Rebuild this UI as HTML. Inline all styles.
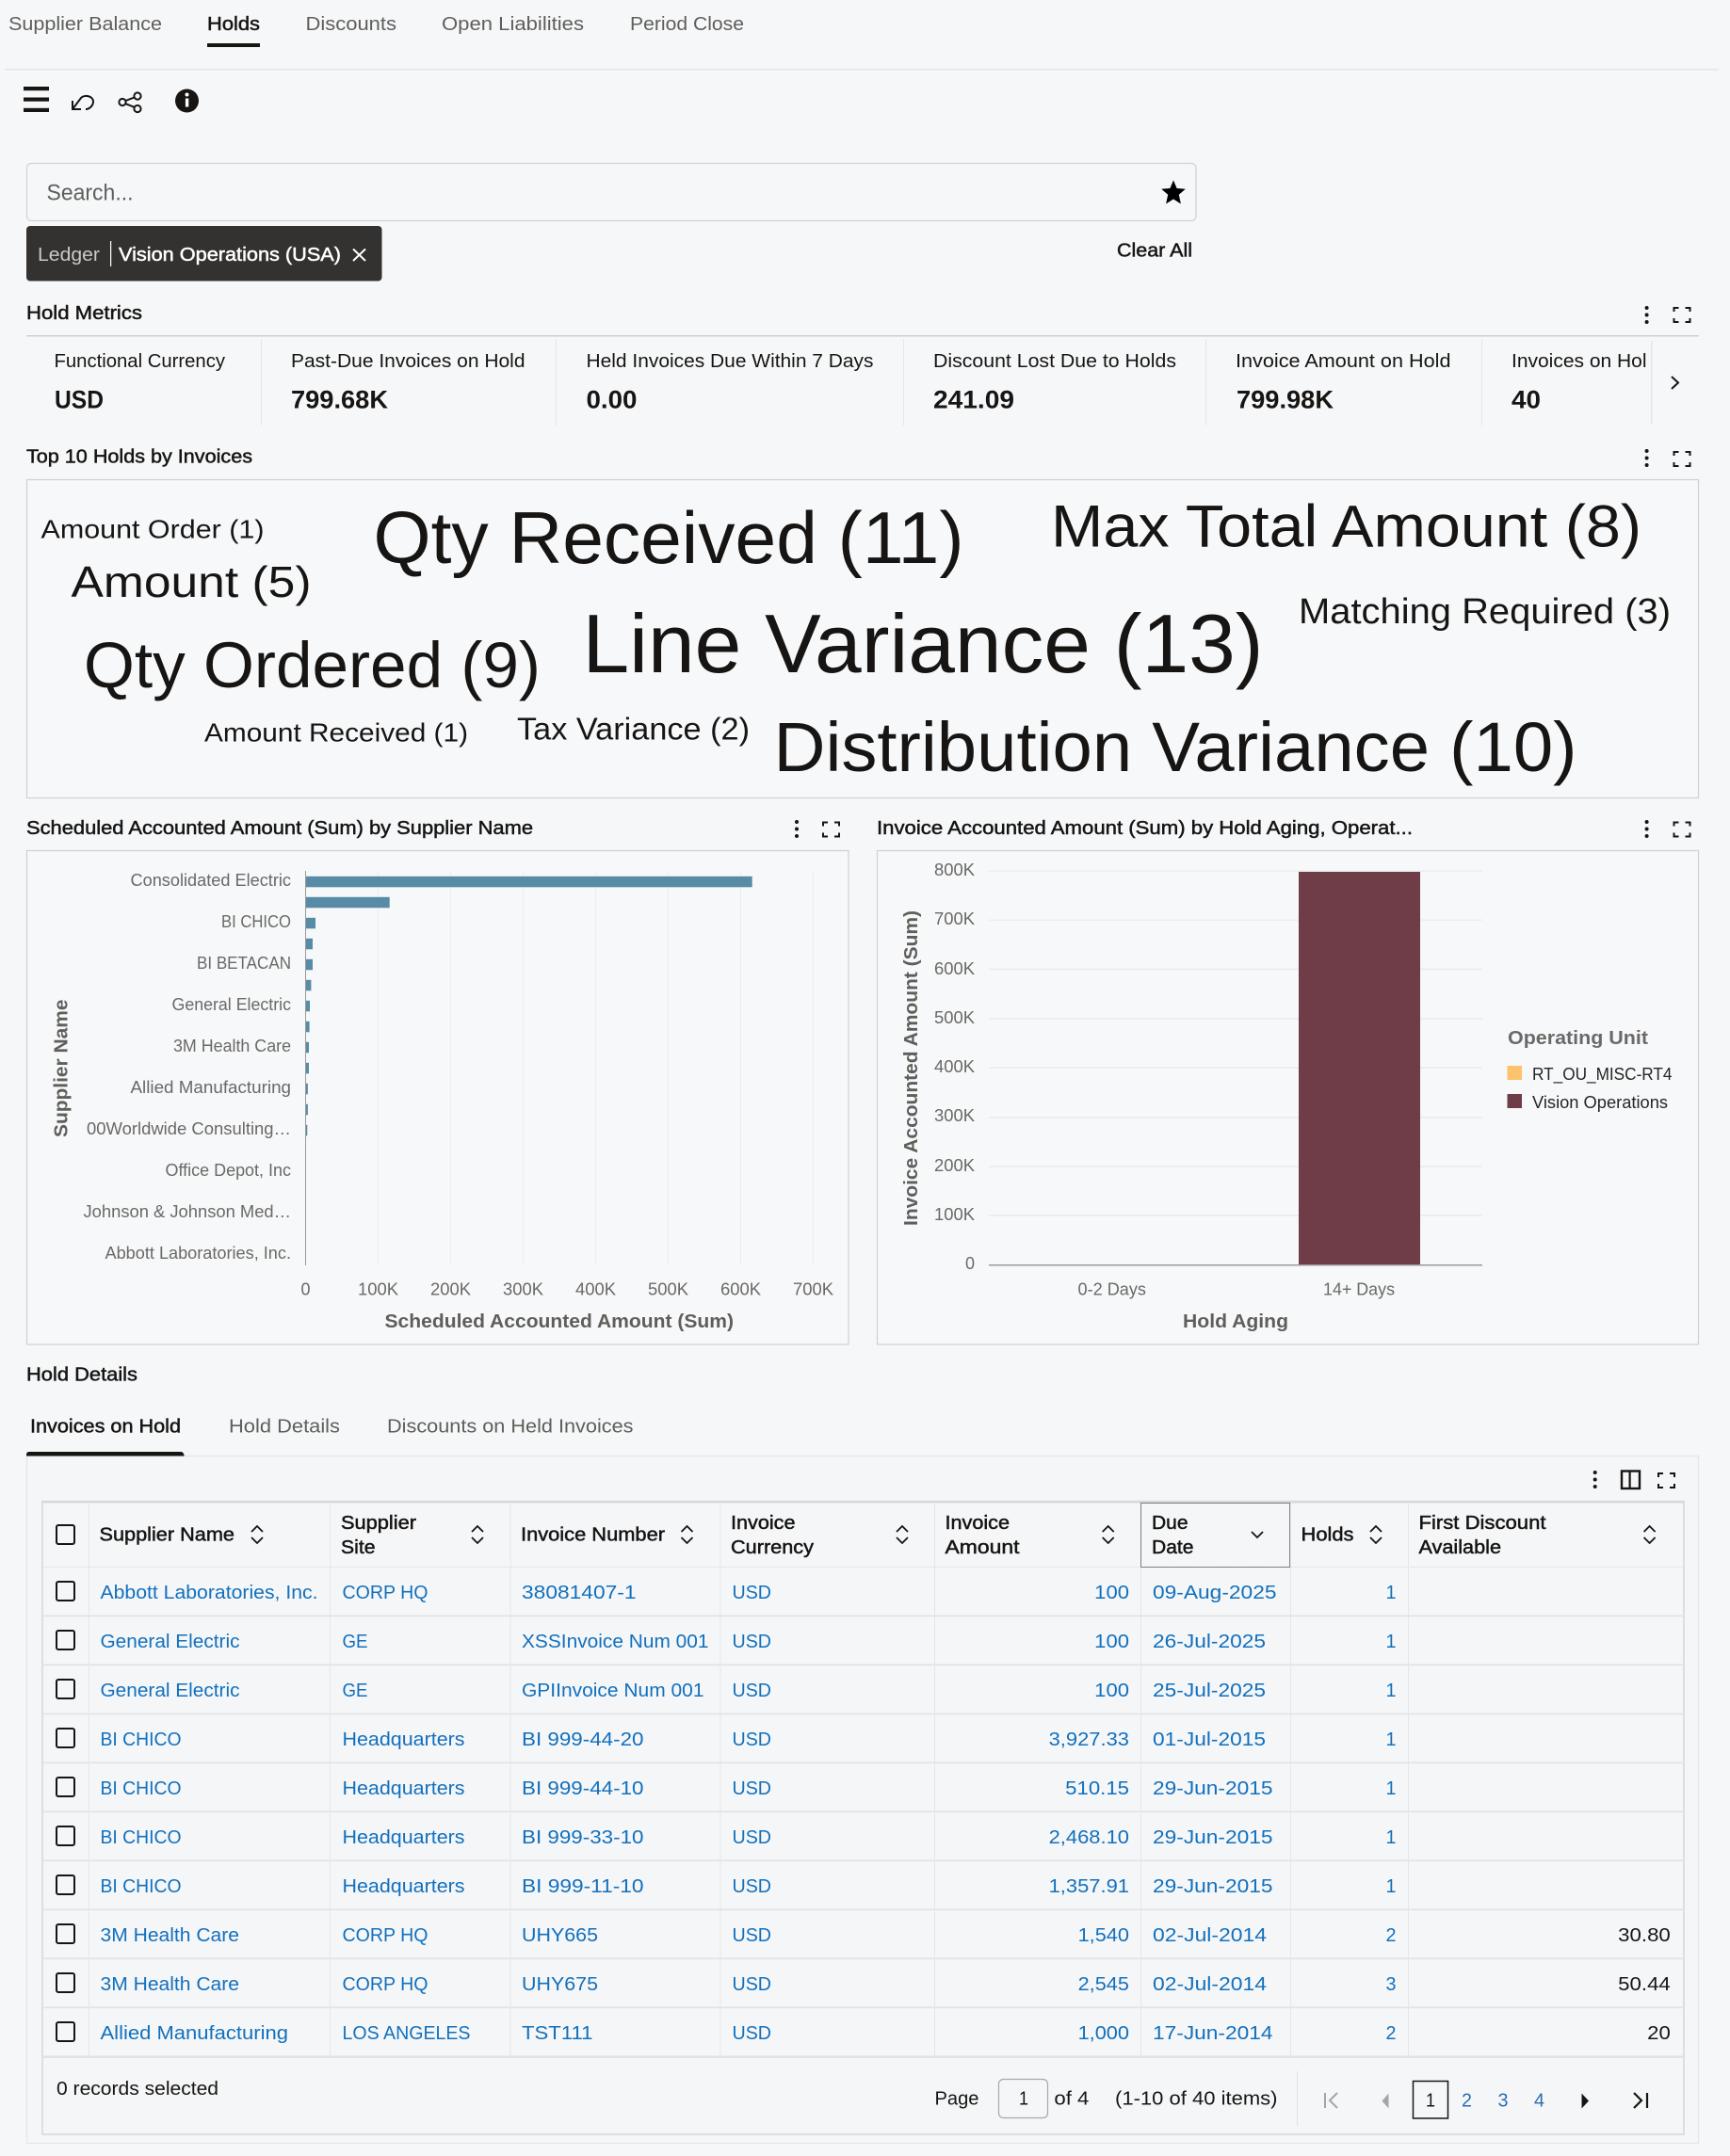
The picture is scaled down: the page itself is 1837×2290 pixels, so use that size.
<!DOCTYPE html>
<html lang="en">
<head>
<meta charset="utf-8">
<title>Holds</title>
<style>
html,body{margin:0;padding:0;background:#f6f7f9;width:1837px;height:2290px;overflow:hidden}
svg{display:block}
text{font-family:"Liberation Sans",Arial,sans-serif;font-size:20.5px;fill:#161513}
.s{stroke:#161513;stroke-width:.5px}
.g{fill:#5f5e5b}
.a{fill:#6a6966;font-size:18.5px}
.at{fill:#5f5e5b;font-weight:700;font-size:20px}
.l{fill:#1270bd}
.v{font-weight:700;font-size:27px}
.ic{fill:none;stroke:#161513;stroke-width:2}
</style>
</head>
<body>
<svg width="1837" height="2290" viewBox="0 0 1837 2290" xmlns="http://www.w3.org/2000/svg">
<defs>
<g id="exp" fill="none" stroke="#161513" stroke-width="2"><path d="M1 5V1h5M13 1h5v4M1 12v4h5M13 16h5v-4"/></g>
<g id="dots" fill="#161513"><circle cx="0" cy="1.5" r="2"/><circle cx="0" cy="9" r="2"/><circle cx="0" cy="16.5" r="2"/></g>
<g id="sort" fill="none" stroke="#161513" stroke-width="1.8"><path d="M-6 -3l6-6 6 6M-6 3l6 6 6-6"/></g>
<rect id="cb" width="19" height="20" rx="2" fill="none" stroke="#161513" stroke-width="2"/>
</defs>
<rect width="1837" height="2290" fill="#f6f7f9"/>

<!-- top tabs -->
<text class="g" x="9" y="32" textLength="163" lengthAdjust="spacingAndGlyphs">Supplier Balance</text>
<text class="s" x="220" y="32" textLength="56" lengthAdjust="spacingAndGlyphs">Holds</text>
<text class="g" x="324.5" y="32" textLength="96.5" lengthAdjust="spacingAndGlyphs">Discounts</text>
<text class="g" x="469" y="32" textLength="151" lengthAdjust="spacingAndGlyphs">Open Liabilities</text>
<text class="g" x="669" y="32" textLength="121" lengthAdjust="spacingAndGlyphs">Period Close</text>
<rect x="220" y="46" width="56" height="4" fill="#161513"/>
<rect x="5" y="73" width="1820" height="1.5" fill="#e5e5e5"/>

<!-- toolbar icons -->
<rect x="25" y="92" width="27" height="4.2" fill="#161513"/>
<rect x="25" y="103.5" width="27" height="4.2" fill="#161513"/>
<rect x="25" y="114.8" width="27" height="4.2" fill="#161513"/>
<path class="ic" d="M77 107v9h9M77 116l9-12c4-4 13-2 13 4 0 4-4 8-8 8"/>
<g class="ic"><circle cx="146" cy="102" r="3.6"/><circle cx="130" cy="108.5" r="3.6"/><circle cx="146" cy="115.5" r="3.6"/><path d="M133.3 107l9.4-3.6M133.3 110.2l9.4 3.6"/></g>
<circle cx="198.5" cy="107" r="12.5" fill="#161513"/>
<circle cx="198.5" cy="100.5" r="2" fill="#fff"/>
<rect x="196.9" y="104.5" width="3.4" height="9" fill="#fff"/>

<!-- search -->
<rect x="28.5" y="173.5" width="1241.5" height="61" rx="5" fill="#f6f7f9" stroke="#d2d2d2" stroke-width="1.2"/>
<text x="49.5" y="212.5" textLength="92" lengthAdjust="spacingAndGlyphs" style="font-size:24px;fill:#5f5e5b">Search...</text>
<polygon fill="#000" points="1246,191.5 1249.6,200 1258.8,200.8 1251.8,206.8 1253.9,216.5 1246,211.5 1238.1,216.5 1240.2,206.8 1233.2,200.8 1242.4,200"/>

<!-- chip -->
<rect x="28" y="240" width="377.5" height="58.5" rx="4" fill="#333231"/>
<text x="40" y="277" textLength="66" lengthAdjust="spacingAndGlyphs" style="fill:#c9c8c5">Ledger</text>
<rect x="117" y="256" width="1.2" height="27" fill="#fff"/>
<text x="126" y="277" textLength="236" lengthAdjust="spacingAndGlyphs" style="fill:#fff;stroke:#fff;stroke-width:.5px">Vision Operations (USA)</text>
<path d="M375 264.5l13 12.5M388 264.5l-13 12.5" stroke="#fff" stroke-width="2" fill="none"/>
<text class="s" x="1186" y="272.5" textLength="80" lengthAdjust="spacingAndGlyphs">Clear All</text>

<!-- hold metrics -->
<text class="s" x="28" y="339" textLength="123" lengthAdjust="spacingAndGlyphs">Hold Metrics</text>
<use href="#dots" x="1748.6" y="325.5"/>
<use href="#exp" x="1776.5" y="326"/>
<rect x="28" y="356" width="1776" height="1.5" fill="#d0d0d0"/>
<g fill="#e6e6e6">
<rect x="277" y="360" width="1" height="92"/><rect x="590" y="360" width="1" height="92"/><rect x="959" y="360" width="1" height="92"/><rect x="1280" y="360" width="1" height="92"/><rect x="1573" y="360" width="1" height="92"/><rect x="1753" y="362" width="1.5" height="88"/>
</g>
<text x="57.5" y="390" textLength="181.5" lengthAdjust="spacingAndGlyphs">Functional Currency</text>
<text x="309" y="390" textLength="248.5" lengthAdjust="spacingAndGlyphs">Past-Due Invoices on Hold</text>
<text x="622.5" y="390" textLength="305" lengthAdjust="spacingAndGlyphs">Held Invoices Due Within 7 Days</text>
<text x="991" y="390" textLength="258" lengthAdjust="spacingAndGlyphs">Discount Lost Due to Holds</text>
<text x="1312" y="390" textLength="228.5" lengthAdjust="spacingAndGlyphs">Invoice Amount on Hold</text>
<text x="1605" y="390" textLength="143.5" lengthAdjust="spacingAndGlyphs">Invoices on Hol</text>
<text class="v" x="58" y="433.5" textLength="52" lengthAdjust="spacingAndGlyphs">USD</text>
<text class="v" x="309" y="433.5" textLength="103" lengthAdjust="spacingAndGlyphs">799.68K</text>
<text class="v" x="622.5" y="433.5" textLength="54" lengthAdjust="spacingAndGlyphs">0.00</text>
<text class="v" x="991" y="433.5" textLength="86" lengthAdjust="spacingAndGlyphs">241.09</text>
<text class="v" x="1313" y="433.5" textLength="103" lengthAdjust="spacingAndGlyphs">799.98K</text>
<text class="v" x="1605" y="433.5" textLength="31" lengthAdjust="spacingAndGlyphs">40</text>
<path class="ic" d="M1775 400l7 6.5-7 6.5"/>

<!-- word cloud -->
<text class="s" x="28" y="491.5" textLength="240" lengthAdjust="spacingAndGlyphs">Top 10 Holds by Invoices</text>
<use href="#dots" x="1748.6" y="477.5"/>
<use href="#exp" x="1776.5" y="479"/>
<rect x="28.5" y="509.5" width="1775" height="338" fill="#f7f8fa" stroke="#cfd0d2" stroke-width="1.2"/>
<text x="43.5" y="571.5" textLength="237" lengthAdjust="spacingAndGlyphs" style="font-size:28px">Amount Order (1)</text>
<text x="75.5" y="634" textLength="255" lengthAdjust="spacingAndGlyphs" style="font-size:46px">Amount (5)</text>
<text x="396.5" y="598" textLength="627" lengthAdjust="spacingAndGlyphs" style="font-size:78px">Qty Received (11)</text>
<text x="1116" y="580.5" textLength="627" lengthAdjust="spacingAndGlyphs" style="font-size:63px">Max Total Amount (8)</text>
<text x="89" y="730" textLength="485" lengthAdjust="spacingAndGlyphs" style="font-size:69px">Qty Ordered (9)</text>
<text x="618.5" y="714" textLength="723" lengthAdjust="spacingAndGlyphs" style="font-size:88px">Line Variance (13)</text>
<text x="1379" y="662" textLength="395" lengthAdjust="spacingAndGlyphs" style="font-size:38px">Matching Required (3)</text>
<text x="217" y="787.5" textLength="280" lengthAdjust="spacingAndGlyphs" style="font-size:28px">Amount Received (1)</text>
<text x="549" y="785.5" textLength="247" lengthAdjust="spacingAndGlyphs" style="font-size:33px">Tax Variance (2)</text>
<text x="821.5" y="819" textLength="853" lengthAdjust="spacingAndGlyphs" style="font-size:74px">Distribution Variance (10)</text>

<!-- chart 1 -->
<text class="s" x="28" y="886" textLength="538" lengthAdjust="spacingAndGlyphs">Scheduled Accounted Amount (Sum) by Supplier Name</text>
<use href="#dots" x="846" y="871.5"/>
<use href="#exp" x="873" y="872.5"/>
<rect x="28.5" y="903.5" width="872.5" height="524.5" fill="#f7f8fa" stroke="#cfd0d2" stroke-width="1.2"/>
<g fill="#ecedee">
<rect x="401" y="925" width="1" height="419"/><rect x="478" y="925" width="1" height="419"/><rect x="555" y="925" width="1" height="419"/><rect x="632" y="925" width="1" height="419"/><rect x="709" y="925" width="1" height="419"/><rect x="786" y="925" width="1" height="419"/><rect x="863" y="925" width="1" height="419"/>
</g>
<g fill="#588ba5">
<rect x="324.5" y="930.8" width="474.2" height="11.5"/>
<rect x="324.5" y="952.8" width="89.2" height="11.5"/>
<rect x="324.5" y="974.8" width="10.5" height="11.5"/>
<rect x="324.5" y="996.8" width="7.5" height="11.5"/>
<rect x="324.5" y="1018.8" width="7.5" height="11.5"/>
<rect x="324.5" y="1040.8" width="5.9" height="11.5"/>
<rect x="324.5" y="1062.8" width="4.5" height="11.5"/>
<rect x="324.5" y="1084.8" width="4.1" height="11.5"/>
<rect x="324.5" y="1106.8" width="3.5" height="11.5"/>
<rect x="324.5" y="1128.8" width="3.5" height="11.5"/>
<rect x="324.5" y="1150.8" width="2.4" height="11.5"/>
<rect x="324.5" y="1172.8" width="2.4" height="11.5"/>
<rect x="324.5" y="1194.8" width="1.8" height="11.5"/>
</g>
<rect x="324" y="925" width="1" height="419" fill="#9a9a9a"/>
<text class="a" x="138.5" y="941" textLength="170.5" lengthAdjust="spacingAndGlyphs">Consolidated Electric</text>
<text class="a" x="235" y="985" textLength="74" lengthAdjust="spacingAndGlyphs">BI CHICO</text>
<text class="a" x="209" y="1029" textLength="100" lengthAdjust="spacingAndGlyphs">BI BETACAN</text>
<text class="a" x="182.5" y="1073" textLength="126.5" lengthAdjust="spacingAndGlyphs">General Electric</text>
<text class="a" x="184" y="1117" textLength="125" lengthAdjust="spacingAndGlyphs">3M Health Care</text>
<text class="a" x="138.5" y="1161" textLength="170.5" lengthAdjust="spacingAndGlyphs">Allied Manufacturing</text>
<text class="a" x="92" y="1205" textLength="217" lengthAdjust="spacingAndGlyphs">00Worldwide Consulting…</text>
<text class="a" x="175.5" y="1249" textLength="133.5" lengthAdjust="spacingAndGlyphs">Office Depot, Inc</text>
<text class="a" x="88.5" y="1293" textLength="220.5" lengthAdjust="spacingAndGlyphs">Johnson &amp; Johnson Med…</text>
<text class="a" x="111.5" y="1337" textLength="197.5" lengthAdjust="spacingAndGlyphs">Abbott Laboratories, Inc.</text>
<text class="a" x="319.5" y="1375.5" textLength="10" lengthAdjust="spacingAndGlyphs">0</text>
<text class="a" x="380" y="1375.5" textLength="43" lengthAdjust="spacingAndGlyphs">100K</text>
<text class="a" x="457" y="1375.5" textLength="43" lengthAdjust="spacingAndGlyphs">200K</text>
<text class="a" x="534" y="1375.5" textLength="43" lengthAdjust="spacingAndGlyphs">300K</text>
<text class="a" x="611" y="1375.5" textLength="43" lengthAdjust="spacingAndGlyphs">400K</text>
<text class="a" x="688" y="1375.5" textLength="43" lengthAdjust="spacingAndGlyphs">500K</text>
<text class="a" x="765" y="1375.5" textLength="43" lengthAdjust="spacingAndGlyphs">600K</text>
<text class="a" x="842" y="1375.5" textLength="43" lengthAdjust="spacingAndGlyphs">700K</text>
<text class="at" x="408.5" y="1410" textLength="370.5" lengthAdjust="spacingAndGlyphs">Scheduled Accounted Amount (Sum)</text>
<text class="at" transform="translate(71.5 1208) rotate(-90)" x="0" y="0" textLength="146.5" lengthAdjust="spacingAndGlyphs">Supplier Name</text>

<!-- chart 2 -->
<text class="s" x="931" y="886" textLength="569" lengthAdjust="spacingAndGlyphs">Invoice Accounted Amount (Sum) by Hold Aging, Operat...</text>
<use href="#dots" x="1748.6" y="871.5"/>
<use href="#exp" x="1776.5" y="872.5"/>
<rect x="931.5" y="903.5" width="872" height="524.5" fill="#f7f8fa" stroke="#cfd0d2" stroke-width="1.2"/>
<g fill="#ebeef1">
<rect x="1050" y="924.5" width="524" height="1.5"/><rect x="1050" y="976.5" width="524" height="1.5"/><rect x="1050" y="1028.5" width="524" height="2"/><rect x="1050" y="1081" width="524" height="2"/><rect x="1050" y="1133" width="524" height="2"/><rect x="1050" y="1186" width="524" height="2"/><rect x="1050" y="1238" width="524" height="2"/><rect x="1050" y="1290" width="524" height="2"/>
</g>
<rect x="1379" y="926" width="129" height="417" fill="#6f3d48"/>
<rect x="1050" y="1343" width="524" height="1.5" fill="#9a9a9a"/>
<text class="a" x="992" y="930" textLength="43" lengthAdjust="spacingAndGlyphs">800K</text>
<text class="a" x="992" y="982" textLength="43" lengthAdjust="spacingAndGlyphs">700K</text>
<text class="a" x="992" y="1035" textLength="43" lengthAdjust="spacingAndGlyphs">600K</text>
<text class="a" x="992" y="1087" textLength="43" lengthAdjust="spacingAndGlyphs">500K</text>
<text class="a" x="992" y="1139" textLength="43" lengthAdjust="spacingAndGlyphs">400K</text>
<text class="a" x="992" y="1191" textLength="43" lengthAdjust="spacingAndGlyphs">300K</text>
<text class="a" x="992" y="1244" textLength="43" lengthAdjust="spacingAndGlyphs">200K</text>
<text class="a" x="992" y="1296" textLength="43" lengthAdjust="spacingAndGlyphs">100K</text>
<text class="a" x="1025" y="1348" textLength="10" lengthAdjust="spacingAndGlyphs">0</text>
<text class="a" x="1144.5" y="1375.5" textLength="72.5" lengthAdjust="spacingAndGlyphs">0-2 Days</text>
<text class="a" x="1405" y="1375.5" textLength="76" lengthAdjust="spacingAndGlyphs">14+ Days</text>
<text class="at" x="1256" y="1410" textLength="112" lengthAdjust="spacingAndGlyphs">Hold Aging</text>
<text class="at" transform="translate(974 1302) rotate(-90)" x="0" y="0" textLength="335" lengthAdjust="spacingAndGlyphs">Invoice Accounted Amount (Sum)</text>
<text class="at" x="1601" y="1109" textLength="149" lengthAdjust="spacingAndGlyphs" style="fill:#6b6a68">Operating Unit</text>
<rect x="1600.5" y="1132" width="15.5" height="15" fill="#fcc26d"/>
<rect x="1600.5" y="1162" width="15.5" height="15" fill="#6f3d48"/>
<text x="1627" y="1147" textLength="148.5" lengthAdjust="spacingAndGlyphs" style="font-size:18px;fill:#262522">RT_OU_MISC-RT4</text>
<text x="1627" y="1177" textLength="144" lengthAdjust="spacingAndGlyphs" style="font-size:18px;fill:#262522">Vision Operations</text>

<!-- hold details -->
<text class="s" x="28" y="1466.5" textLength="118" lengthAdjust="spacingAndGlyphs">Hold Details</text>
<text class="s" x="32" y="1521.5" textLength="160" lengthAdjust="spacingAndGlyphs">Invoices on Hold</text>
<text class="g" x="243" y="1521.5" textLength="118" lengthAdjust="spacingAndGlyphs">Hold Details</text>
<text class="g" x="411" y="1521.5" textLength="261.5" lengthAdjust="spacingAndGlyphs">Discounts on Held Invoices</text>
<path d="M28 1546v-1q0-3 3-3h161q3 0 3.5 4z" fill="#161513"/>
<rect x="28.5" y="1546.5" width="1775" height="730" fill="#f5f6f8" stroke="#e6e6e6" stroke-width="1.2"/>
<path d="M28 1546h167.5" stroke="#161513" stroke-width="1"/>
<use href="#dots" x="1693.7" y="1562.5"/>
<rect x="1722" y="1562.5" width="19" height="18.5" fill="none" stroke="#161513" stroke-width="2.4"/>
<rect x="1729.5" y="1562.5" width="2.2" height="18.5" fill="#161513"/>
<use href="#exp" x="1760" y="1564"/>

<!-- table frame -->
<rect x="45" y="1594.5" width="1743" height="672.5" fill="#f5f6f8" stroke="#cfcfcd" stroke-width="1.2"/>
<rect x="45" y="1594" width="1743" height="2.5" fill="#d8d8d6"/>
<path d="M45 1664.5H1788" stroke="#d8d8d6" stroke-width="1" stroke-dasharray="1 1" fill="none"/>
<g fill="#e2e2e0">
<rect x="45" y="1715.5" width="1743" height="1.6"/><rect x="45" y="1767.5" width="1743" height="1.6"/><rect x="45" y="1819.6" width="1743" height="1.6"/><rect x="45" y="1871.5" width="1743" height="1.6"/><rect x="45" y="1923.5" width="1743" height="1.6"/><rect x="45" y="1975.5" width="1743" height="1.6"/><rect x="45" y="2027.5" width="1743" height="1.6"/><rect x="45" y="2079.5" width="1743" height="1.6"/><rect x="45" y="2131.5" width="1743" height="1.6"/>
<rect x="45" y="2183.5" width="1743" height="2.5"/>
</g>
<g fill="#e6e6e6">
<rect x="94" y="1596" width="1" height="588"/><rect x="350" y="1596" width="1" height="588"/><rect x="541.5" y="1596" width="1" height="588"/><rect x="764.5" y="1596" width="1" height="588"/><rect x="992" y="1596" width="1" height="588"/><rect x="1211" y="1596" width="1" height="588"/><rect x="1370" y="1596" width="1" height="588"/><rect x="1495" y="1596" width="1" height="588"/>
</g>
<rect x="1211.5" y="1596.5" width="158" height="68" fill="none" stroke="#161513" stroke-width="1" stroke-dasharray="1 1"/>

<!-- header -->
<use href="#cb" x="60" y="1620"/>
<text class="s" x="105.5" y="1636.5" textLength="143.5" lengthAdjust="spacingAndGlyphs">Supplier Name</text>
<use href="#sort" x="273" y="1630"/>
<text class="s" x="362" y="1624" textLength="80" lengthAdjust="spacingAndGlyphs">Supplier</text>
<text class="s" x="362" y="1650" textLength="36.5" lengthAdjust="spacingAndGlyphs">Site</text>
<use href="#sort" x="507" y="1630"/>
<text class="s" x="553" y="1636.5" textLength="153" lengthAdjust="spacingAndGlyphs">Invoice Number</text>
<use href="#sort" x="729.5" y="1630"/>
<text class="s" x="776" y="1624" textLength="68.5" lengthAdjust="spacingAndGlyphs">Invoice</text>
<text class="s" x="776" y="1650" textLength="88" lengthAdjust="spacingAndGlyphs">Currency</text>
<use href="#sort" x="958" y="1630"/>
<text class="s" x="1003.5" y="1624" textLength="68.5" lengthAdjust="spacingAndGlyphs">Invoice</text>
<text class="s" x="1003.5" y="1650" textLength="79" lengthAdjust="spacingAndGlyphs">Amount</text>
<use href="#sort" x="1176.7" y="1630"/>
<text class="s" x="1223" y="1624" textLength="38.5" lengthAdjust="spacingAndGlyphs">Due</text>
<text class="s" x="1223" y="1650" textLength="44.5" lengthAdjust="spacingAndGlyphs">Date</text>
<path d="M1329 1627l6 6 6-6" fill="none" stroke="#161513" stroke-width="1.8"/>
<text class="s" x="1381.5" y="1636.5" textLength="56" lengthAdjust="spacingAndGlyphs">Holds</text>
<use href="#sort" x="1461" y="1630"/>
<text class="s" x="1506.5" y="1624" textLength="135" lengthAdjust="spacingAndGlyphs">First Discount</text>
<text class="s" x="1506.5" y="1650" textLength="87.5" lengthAdjust="spacingAndGlyphs">Available</text>
<use href="#sort" x="1751.6" y="1630"/>

<!-- checkboxes -->
<use href="#cb" x="60" y="1680"/><use href="#cb" x="60" y="1732"/><use href="#cb" x="60" y="1784"/><use href="#cb" x="60" y="1836"/><use href="#cb" x="60" y="1888"/><use href="#cb" x="60" y="1940"/><use href="#cb" x="60" y="1992"/><use href="#cb" x="60" y="2044"/><use href="#cb" x="60" y="2096"/><use href="#cb" x="60" y="2148"/>

<!-- col 1 -->
<text class="l" x="106.5" y="1698" textLength="231" lengthAdjust="spacingAndGlyphs">Abbott Laboratories, Inc.</text>
<text class="l" x="106.5" y="1750" textLength="148" lengthAdjust="spacingAndGlyphs">General Electric</text>
<text class="l" x="106.5" y="1802" textLength="148" lengthAdjust="spacingAndGlyphs">General Electric</text>
<text class="l" x="106.5" y="1854" textLength="86" lengthAdjust="spacingAndGlyphs">BI CHICO</text>
<text class="l" x="106.5" y="1906" textLength="86" lengthAdjust="spacingAndGlyphs">BI CHICO</text>
<text class="l" x="106.5" y="1958" textLength="86" lengthAdjust="spacingAndGlyphs">BI CHICO</text>
<text class="l" x="106.5" y="2010" textLength="86" lengthAdjust="spacingAndGlyphs">BI CHICO</text>
<text class="l" x="106.5" y="2062" textLength="147.5" lengthAdjust="spacingAndGlyphs">3M Health Care</text>
<text class="l" x="106.5" y="2114" textLength="147.5" lengthAdjust="spacingAndGlyphs">3M Health Care</text>
<text class="l" x="106.5" y="2166" textLength="199.5" lengthAdjust="spacingAndGlyphs">Allied Manufacturing</text>
<!-- col 2 -->
<text class="l" x="363.5" y="1698" textLength="91" lengthAdjust="spacingAndGlyphs">CORP HQ</text>
<text class="l" x="363.5" y="1750" textLength="27" lengthAdjust="spacingAndGlyphs">GE</text>
<text class="l" x="363.5" y="1802" textLength="27" lengthAdjust="spacingAndGlyphs">GE</text>
<text class="l" x="363.5" y="1854" textLength="130" lengthAdjust="spacingAndGlyphs">Headquarters</text>
<text class="l" x="363.5" y="1906" textLength="130" lengthAdjust="spacingAndGlyphs">Headquarters</text>
<text class="l" x="363.5" y="1958" textLength="130" lengthAdjust="spacingAndGlyphs">Headquarters</text>
<text class="l" x="363.5" y="2010" textLength="130" lengthAdjust="spacingAndGlyphs">Headquarters</text>
<text class="l" x="363.5" y="2062" textLength="91" lengthAdjust="spacingAndGlyphs">CORP HQ</text>
<text class="l" x="363.5" y="2114" textLength="91" lengthAdjust="spacingAndGlyphs">CORP HQ</text>
<text class="l" x="363.5" y="2166" textLength="136" lengthAdjust="spacingAndGlyphs">LOS ANGELES</text>
<!-- col 3 -->
<text class="l" x="554" y="1698" textLength="121.5" lengthAdjust="spacingAndGlyphs">38081407-1</text>
<text class="l" x="554" y="1750" textLength="198.5" lengthAdjust="spacingAndGlyphs">XSSInvoice Num 001</text>
<text class="l" x="554" y="1802" textLength="193.5" lengthAdjust="spacingAndGlyphs">GPIInvoice Num 001</text>
<text class="l" x="554" y="1854" textLength="129.5" lengthAdjust="spacingAndGlyphs">BI 999-44-20</text>
<text class="l" x="554" y="1906" textLength="129.5" lengthAdjust="spacingAndGlyphs">BI 999-44-10</text>
<text class="l" x="554" y="1958" textLength="129.5" lengthAdjust="spacingAndGlyphs">BI 999-33-10</text>
<text class="l" x="554" y="2010" textLength="129.5" lengthAdjust="spacingAndGlyphs">BI 999-11-10</text>
<text class="l" x="554" y="2062" textLength="81" lengthAdjust="spacingAndGlyphs">UHY665</text>
<text class="l" x="554" y="2114" textLength="81" lengthAdjust="spacingAndGlyphs">UHY675</text>
<text class="l" x="554" y="2166" textLength="75.5" lengthAdjust="spacingAndGlyphs">TST111</text>
<!-- col 4 -->
<text class="l" x="777.5" y="1698" textLength="41.5" lengthAdjust="spacingAndGlyphs">USD</text>
<text class="l" x="777.5" y="1750" textLength="41.5" lengthAdjust="spacingAndGlyphs">USD</text>
<text class="l" x="777.5" y="1802" textLength="41.5" lengthAdjust="spacingAndGlyphs">USD</text>
<text class="l" x="777.5" y="1854" textLength="41.5" lengthAdjust="spacingAndGlyphs">USD</text>
<text class="l" x="777.5" y="1906" textLength="41.5" lengthAdjust="spacingAndGlyphs">USD</text>
<text class="l" x="777.5" y="1958" textLength="41.5" lengthAdjust="spacingAndGlyphs">USD</text>
<text class="l" x="777.5" y="2010" textLength="41.5" lengthAdjust="spacingAndGlyphs">USD</text>
<text class="l" x="777.5" y="2062" textLength="41.5" lengthAdjust="spacingAndGlyphs">USD</text>
<text class="l" x="777.5" y="2114" textLength="41.5" lengthAdjust="spacingAndGlyphs">USD</text>
<text class="l" x="777.5" y="2166" textLength="41.5" lengthAdjust="spacingAndGlyphs">USD</text>
<!-- col 5 -->
<text class="l" x="1162.2" y="1698" textLength="36.8" lengthAdjust="spacingAndGlyphs">100</text>
<text class="l" x="1162.2" y="1750" textLength="36.8" lengthAdjust="spacingAndGlyphs">100</text>
<text class="l" x="1162.2" y="1802" textLength="36.8" lengthAdjust="spacingAndGlyphs">100</text>
<text class="l" x="1113.6" y="1854" textLength="85.4" lengthAdjust="spacingAndGlyphs">3,927.33</text>
<text class="l" x="1131.2" y="1906" textLength="67.8" lengthAdjust="spacingAndGlyphs">510.15</text>
<text class="l" x="1113.6" y="1958" textLength="85.4" lengthAdjust="spacingAndGlyphs">2,468.10</text>
<text class="l" x="1113.6" y="2010" textLength="85.4" lengthAdjust="spacingAndGlyphs">1,357.91</text>
<text class="l" x="1144.6" y="2062" textLength="54.4" lengthAdjust="spacingAndGlyphs">1,540</text>
<text class="l" x="1144.6" y="2114" textLength="54.4" lengthAdjust="spacingAndGlyphs">2,545</text>
<text class="l" x="1144.6" y="2166" textLength="54.4" lengthAdjust="spacingAndGlyphs">1,000</text>
<!-- col 6 -->
<text class="l" x="1224" y="1698" textLength="131.5" lengthAdjust="spacingAndGlyphs">09-Aug-2025</text>
<text class="l" x="1224" y="1750" textLength="120" lengthAdjust="spacingAndGlyphs">26-Jul-2025</text>
<text class="l" x="1224" y="1802" textLength="120" lengthAdjust="spacingAndGlyphs">25-Jul-2025</text>
<text class="l" x="1224" y="1854" textLength="120" lengthAdjust="spacingAndGlyphs">01-Jul-2015</text>
<text class="l" x="1224" y="1906" textLength="127.5" lengthAdjust="spacingAndGlyphs">29-Jun-2015</text>
<text class="l" x="1224" y="1958" textLength="127.5" lengthAdjust="spacingAndGlyphs">29-Jun-2015</text>
<text class="l" x="1224" y="2010" textLength="127.5" lengthAdjust="spacingAndGlyphs">29-Jun-2015</text>
<text class="l" x="1224" y="2062" textLength="121" lengthAdjust="spacingAndGlyphs">02-Jul-2014</text>
<text class="l" x="1224" y="2114" textLength="121" lengthAdjust="spacingAndGlyphs">02-Jul-2014</text>
<text class="l" x="1224" y="2166" textLength="127.5" lengthAdjust="spacingAndGlyphs">17-Jun-2014</text>
<!-- col 7 -->
<text class="l" x="1471.5" y="1698" textLength="11" lengthAdjust="spacingAndGlyphs">1</text>
<text class="l" x="1471.5" y="1750" textLength="11" lengthAdjust="spacingAndGlyphs">1</text>
<text class="l" x="1471.5" y="1802" textLength="11" lengthAdjust="spacingAndGlyphs">1</text>
<text class="l" x="1471.5" y="1854" textLength="11" lengthAdjust="spacingAndGlyphs">1</text>
<text class="l" x="1471.5" y="1906" textLength="11" lengthAdjust="spacingAndGlyphs">1</text>
<text class="l" x="1471.5" y="1958" textLength="11" lengthAdjust="spacingAndGlyphs">1</text>
<text class="l" x="1471.5" y="2010" textLength="11" lengthAdjust="spacingAndGlyphs">1</text>
<text class="l" x="1471.5" y="2062" textLength="11" lengthAdjust="spacingAndGlyphs">2</text>
<text class="l" x="1471.5" y="2114" textLength="11" lengthAdjust="spacingAndGlyphs">3</text>
<text class="l" x="1471.5" y="2166" textLength="11" lengthAdjust="spacingAndGlyphs">2</text>
<!-- col 8 -->
<text x="1718.2" y="2062" textLength="55.6" lengthAdjust="spacingAndGlyphs">30.80</text>
<text x="1718.2" y="2114" textLength="55.6" lengthAdjust="spacingAndGlyphs">50.44</text>
<text x="1749.2" y="2166" textLength="24.6" lengthAdjust="spacingAndGlyphs">20</text>

<!-- footer -->
<text x="60" y="2225" textLength="172" lengthAdjust="spacingAndGlyphs">0 records selected</text>
<text x="992.5" y="2235.5" textLength="47" lengthAdjust="spacingAndGlyphs">Page</text>
<rect x="1060.5" y="2208.5" width="52" height="41" rx="5" fill="#f5f6f8" stroke="#a9a9a9" stroke-width="1.2"/>
<text x="1082" y="2235.5" textLength="10" lengthAdjust="spacingAndGlyphs">1</text>
<text x="1119.4" y="2235.5" textLength="37" lengthAdjust="spacingAndGlyphs">of 4</text>
<text x="1184" y="2235.5" textLength="172.5" lengthAdjust="spacingAndGlyphs">(1-10 of 40 items)</text>
<rect x="1377" y="2200" width="1" height="58" fill="#e2e2e2"/>
<path d="M1407 2223v16M1420 2223l-8 8 8 8" fill="none" stroke="#a5a5a5" stroke-width="2"/>
<polygon points="1474.5,2223.5 1467.5,2231.5 1474.5,2239.5" fill="#a5a5a5"/>
<rect x="1500.5" y="2210.5" width="37" height="39.5" fill="none" stroke="#161513" stroke-width="1.5"/>
<text x="1514" y="2237.5" textLength="10" lengthAdjust="spacingAndGlyphs">1</text>
<text x="1552" y="2237.5" textLength="11" lengthAdjust="spacingAndGlyphs" style="fill:#2a6db0">2</text>
<text x="1590.5" y="2237.5" textLength="11" lengthAdjust="spacingAndGlyphs" style="fill:#2a6db0">3</text>
<text x="1629" y="2237.5" textLength="11" lengthAdjust="spacingAndGlyphs" style="fill:#2a6db0">4</text>
<polygon points="1679.5,2223.5 1687,2231.5 1679.5,2239.5" fill="#161513"/>
<path d="M1735 2223l8 8-8 8M1749 2223v16" fill="none" stroke="#161513" stroke-width="2.2"/>
</svg>
</body>
</html>
